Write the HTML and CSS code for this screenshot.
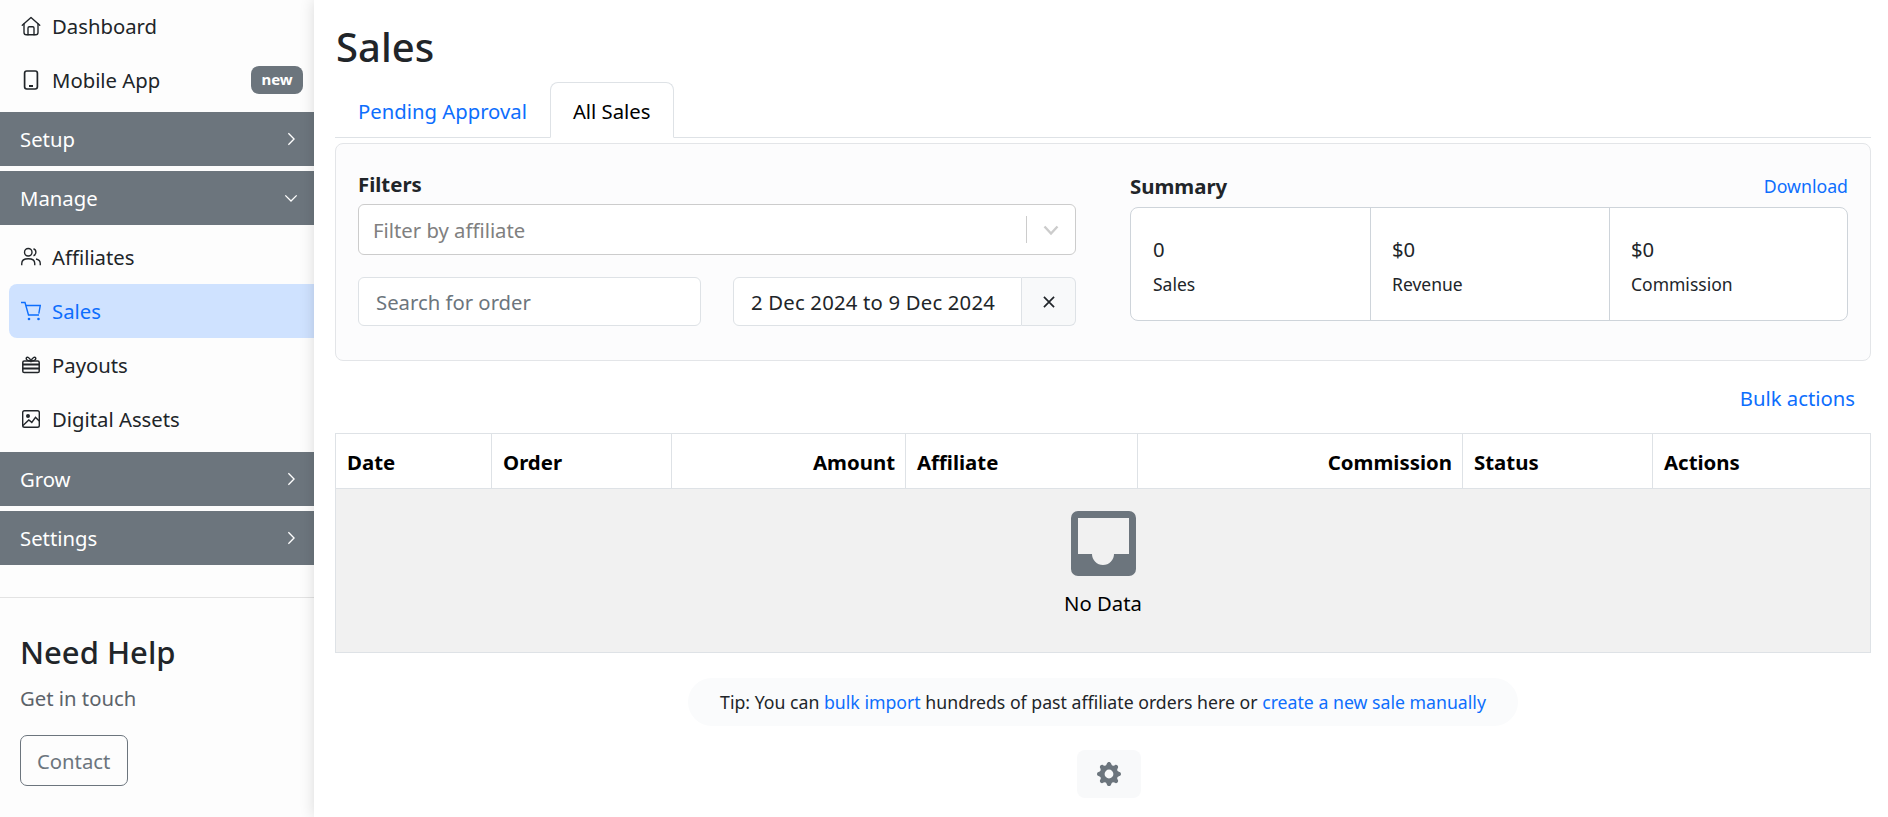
FILE: index.html
```html
<!DOCTYPE html>
<html lang="en">
<head>
    <meta charset="UTF-8">
    <title>Sales</title>
    <meta name="viewport" content="width=device-width, initial-scale=1">
    <link rel="stylesheet" href="styles.css">
</head>
<body>
    <aside class="sidebar">
        <nav class="nav">
            <a class="nav-link">
                <svg class="nav-icon" viewBox="0 0 16 16" fill="none" stroke="currentColor" stroke-width="1.1" stroke-linejoin="round" stroke-linecap="round"><path d="M1 7.4 8 1.2l7 6.2"/><path d="M2.400 6.400v6.800a1.800 1.800 0 0 0 1.800 1.800h7.600a1.800 1.800 0 0 0 1.800-1.800V6.400"/><path d="M5.600 15V9.600a1 1 0 0 1 1-1h2.800a1 1 0 0 1 1 1V15"/></svg>
                Dashboard
            </a>
            <a class="nav-link">
                <svg class="nav-icon" viewBox="0 0 20 20" fill="none" stroke="currentColor" stroke-width="1.700"><rect x="3.600" y="1" width="12.800" height="18" rx="2.200"/><path d="M8 16h4" stroke-width="2"/></svg>
                Mobile App
                <span class="badge">new</span>
            </a>
            <a class="nav-group first">Setup
                <svg class="chevron" viewBox="0 0 16 16" fill="none" stroke="currentColor" stroke-width="1.5"><path d="m5 1.500 6.500 6.500L5 14.500"/></svg>
            </a>
            <a class="nav-group">Manage
                <svg class="chevron" viewBox="0 0 16 16" fill="none" stroke="currentColor" stroke-width="1.5"><path d="M1.500 5 8 11.500 14.500 5"/></svg>
            </a>
            <a class="nav-link">
                <svg class="nav-icon" viewBox="0 0 16 16" fill="none" stroke="currentColor" stroke-width="1.1"><circle cx="5.800" cy="4.200" r="3"/><path d="M.6 14.600v-1.500c0-2.300 2-3.700 5.200-3.700s5.200 1.400 5.200 3.700v1.500"/><path d="M10 1.400a3 3 0 0 1 0 5.600"/><path d="M12 9.600c2 .4 3.400 1.600 3.400 3.500v1.500"/></svg>
                Affiliates
            </a>
            <a class="nav-link active">
                <svg class="nav-icon" viewBox="0 0 20 20" fill="none" stroke="currentColor" stroke-width="1.400"><path d="M0 1.500h4L7.500 14H18"/><path d="M4.800 4.500h14.500l-1.500 8.200"/><circle cx="8" cy="18" r="1.300" fill="currentColor" stroke="none"/><circle cx="17.500" cy="18" r="1.300" fill="currentColor" stroke="none"/></svg>
                Sales
            </a>
            <a class="nav-link">
                <svg class="nav-icon" viewBox="0 0 20 20" fill="none" stroke="currentColor" stroke-width="1.500"><rect x="1.800" y="6" width="16.400" height="11.600" rx="1.400"/><path d="M1.800 9.400h16.400M1.800 13.400h16.400" stroke-width="2"/><path d="M10 6C8.400 1.800 5.400 1.400 5.200 3.400 5 5.200 7.800 6 10 6c2.200 0 5-.8 4.800-2.600C14.600 1.400 11.600 1.800 10 6z"/></svg>
                Payouts
            </a>
            <a class="nav-link">
                <svg class="nav-icon" viewBox="0 0 20 20" fill="none" stroke="currentColor" stroke-width="1.400"><rect x="1.700" y="1.700" width="16.600" height="16.600" rx="1.800"/><circle cx="7" cy="7" r="2" fill="currentColor" stroke="none"/><path d="M2 16.400 7.800 11l3 2.400 3.700-5 3.800 3.600"/></svg>
                Digital Assets
            </a>
            <a class="nav-group first grow">Grow
                <svg class="chevron" viewBox="0 0 16 16" fill="none" stroke="currentColor" stroke-width="1.5"><path d="m5 1.500 6.500 6.500L5 14.500"/></svg>
            </a>
            <a class="nav-group">Settings
                <svg class="chevron" viewBox="0 0 16 16" fill="none" stroke="currentColor" stroke-width="1.5"><path d="m5 1.500 6.500 6.500L5 14.500"/></svg>
            </a>
        </nav>
        <div class="help">
            <h4>Need Help</h4>
            <p>Get in touch</p>
            <a class="btn-contact">Contact</a>
        </div>
    </aside>

    <main class="main">
        <h1>Sales</h1>
        <div class="tabs">
            <a class="tab">Pending Approval</a>
            <a class="tab active">All Sales</a>
        </div>

        <section class="panel">
            <div class="filters">
                <div class="panel-title filters-title">Filters</div>
                <div class="select">
                    <span class="select-text">Filter by affiliate</span>
                    <span class="select-sep"></span>
                    <svg class="select-arrow" viewBox="0 0 20 20" fill="none" stroke="currentColor" stroke-width="2.4"><path d="m3.500 6.500 6.500 7 6.500-7"/></svg>
                </div>
                <div class="filter-row">
                    <input class="field" type="text" placeholder="Search for order">
                    <div class="date-group">
                        <input class="field date-field" type="text" value="2 Dec 2024 to 9 Dec 2024">
                        <span class="date-clear">
                            <svg viewBox="0 0 16 16" fill="none" stroke="currentColor" stroke-width="1.500"><path d="m3.500 3.500 9 9m0-9-9 9"/></svg>
                        </span>
                    </div>
                </div>
            </div>
            <div class="summary">
                <div class="summary-head">
                    <span class="panel-title">Summary</span>
                    <a class="download">Download</a>
                </div>
                <div class="stats">
                    <div class="stat"><div class="stat-value">0</div><div class="stat-label">Sales</div></div>
                    <div class="stat"><div class="stat-value">$0</div><div class="stat-label">Revenue</div></div>
                    <div class="stat"><div class="stat-value">$0</div><div class="stat-label">Commission</div></div>
                </div>
            </div>
        </section>

        <div class="bulk"><a>Bulk actions</a></div>

        <table class="sales-table">
            <thead>
                <tr>
                    <th class="col-date">Date</th>
                    <th class="col-order">Order</th>
                    <th class="col-amount right">Amount</th>
                    <th class="col-affiliate">Affiliate</th>
                    <th class="col-commission right">Commission</th>
                    <th class="col-status">Status</th>
                    <th>Actions</th>
                </tr>
            </thead>
            <tbody>
                <tr>
                    <td colspan="7" class="empty">
                        <svg class="empty-icon" viewBox="0 0 65 65"><path fill="#6c757d" fill-rule="evenodd" d="M7 0h51a7 7 0 0 1 7 7v51a7 7 0 0 1-7 7H7a7 7 0 0 1-7-7V7a7 7 0 0 1 7-7zm0 7v36h14a11 11 0 0 0 22 0h15V7z"/></svg>
                        <div>No Data</div>
                    </td>
                </tr>
            </tbody>
        </table>

        <div class="tip-row">
            <div class="tip">Tip: You can <a>bulk import</a> hundreds of past affiliate orders here or <a>create a new sale manually</a></div>
        </div>
        <div class="tip-row">
            <button class="gear-btn">
                <svg viewBox="0 0 16 16" fill="#6c757d"><path d="M9.405 1.050c-.413-1.400-2.397-1.400-2.810 0l-.1.340a1.464 1.464 0 0 1-2.105.872l-.310-.170c-1.283-.698-2.686.705-1.987 1.987l.169.311c.446.820.023 1.841-.872 2.105l-.340.100c-1.400.413-1.400 2.397 0 2.810l.340.100a1.464 1.464 0 0 1 .872 2.105l-.170.310c-.698 1.283.705 2.686 1.987 1.987l.311-.169a1.464 1.464 0 0 1 2.105.872l.1.340c.413 1.400 2.397 1.400 2.810 0l.1-.340a1.464 1.464 0 0 1 2.105-.872l.310.170c1.283.698 2.686-.705 1.987-1.987l-.169-.311a1.464 1.464 0 0 1 .872-2.105l.340-.100c1.400-.413 1.400-2.397 0-2.810l-.340-.100a1.464 1.464 0 0 1-.872-2.105l.170-.310c.698-1.283-.705-2.686-1.987-1.987l-.311.169a1.464 1.464 0 0 1-2.105-.872l-.1-.340zM8 10.930a2.929 2.929 0 1 1 0-5.860 2.929 2.929 0 0 1 0 5.858z"/></svg>
            </button>
        </div>
    </main>
</body>
</html>
```

FILE: styles.css
```css
html, body {
    height: 100%;
    margin: 0;
    padding: 0;
    overflow: hidden;
}
body {
    display: flex;
    font-family: "Noto Sans", Arial, sans-serif;
    font-size: 20.3px;
    line-height: 30px;
    color: #212529;
    background: #fff;
}
a { color: #0d6efd; }

/* sidebar */
.sidebar {
    width: 314px;
    flex-shrink: 0;
    background: #fdfdfd;
}
.nav {
    margin-top: -1px;
    padding-bottom: 27px;
    border-bottom: 1px solid #e3e3e3;
}
.nav-link {
    display: flex;
    align-items: center;
    height: 54px;
    padding-left: 21px;
    color: #212529;
}
.nav-link.active {
    margin-left: 9px;
    padding-left: 12px;
    background: #cfe2ff;
    color: #0d6efd;
    border-radius: 8px 0 0 8px;
}
.nav-icon {
    width: 20px;
    height: 20px;
    margin-right: 11px;
}
.badge {
    margin-left: auto;
    margin-right: 11px;
    width: 52px;
    height: 28px;
    border-radius: 8px;
    background: #6c757d;
    color: #fff;
    font-size: 15px;
    font-weight: 700;
    line-height: 27px;
    text-align: center;
}
.nav-group {
    display: flex;
    align-items: center;
    justify-content: space-between;
    height: 54px;
    margin-bottom: 5px;
    padding: 0 16px 0 20px;
    background: #6c757d;
    color: #fff;
}
.nav-group.first { margin-top: 5px; }
.nav-group.grow { margin-top: 6px; }
.chevron {
    width: 14px;
    height: 14px;
}
.help {
    padding: 35px 20px 0;
}
.help h4 {
    margin: 0;
    font-size: 31px;
    font-weight: 500;
    line-height: 38px;
}
.help p {
    margin: 12px 0 0;
    color: #5c636a;
}
.btn-contact {
    display: inline-block;
    margin-top: 22px;
    padding: 10px 17px 9px 16px;
    border: 1px solid #6c757d;
    border-radius: 7px;
    color: #6c757d;
}

/* main */
.main {
    flex: 1;
    min-width: 0;
    position: relative;
    padding: 23px 17px 0 21px;
    background: #fff;
    box-shadow: 0 0 14px rgba(0,0,0,0.14);
}
h1 {
    margin: 0 0 11px;
    padding-left: 1px;
    font-size: 40px;
    font-weight: 500;
    line-height: 48px;
}
.tabs {
    display: flex;
    height: 56px;
    box-sizing: border-box;
    border-bottom: 1px solid #dee2e6;
}
.tab {
    padding: 14px 23px 0;
    height: 55px;
    box-sizing: border-box;
}
.tab.active {
    height: 56px;
    background: #fff;
    color: #000;
    border: 1px solid #dee2e6;
    border-bottom-color: #fff;
    border-radius: 8px 8px 0 0;
    padding: 13px 22px 0;
}
.panel {
    display: grid;
    grid-template-columns: 718px 718px;
    column-gap: 54px;
    height: 218px;
    box-sizing: border-box;
    margin-top: 5px;
    padding: 24px 21px 0 22px;
    background: #fcfcfd;
    border: 1px solid #e3e5e8;
    border-radius: 8px;
}
.panel-title {
    font-size: 20.4px;
    font-weight: 700;
    color: #212529;
}
.filters-title { padding-top: 1px; }
.select {
    display: flex;
    align-items: center;
    height: 51px;
    box-sizing: border-box;
    margin-top: 5px;
    padding-left: 14px;
    background: #fff;
    border: 1px solid #ccc;
    border-radius: 6px;
    color: #808080;
}
.select-text { flex: 1; }
.select-sep {
    width: 1px;
    height: 27px;
    background: #ccc;
}
.select-arrow {
    width: 20px;
    height: 20px;
    margin: 0 14px;
    color: #ccc;
}
.filter-row {
    display: grid;
    grid-template-columns: 343px 343px;
    column-gap: 32px;
    margin-top: 22px;
}
.field {
    width: 100%;
    height: 49px;
    box-sizing: border-box;
    padding: 0 17px;
    font: inherit;
    color: #212529;
    background: #fff;
    border: 1px solid #dee2e6;
    border-radius: 6px;
    outline: none;
}
.field::placeholder { color: #6c757d; opacity: 1; }
.date-group { display: flex; }
.date-group .field {
    border-radius: 6px 0 0 6px;
    flex: 1;
    min-width: 0;
}
.date-field { letter-spacing: 0.2px; }
.date-clear {
    display: flex;
    align-items: center;
    justify-content: center;
    flex: 0 0 54px;
    box-sizing: border-box;
    background: #f8f9fa;
    border: 1px solid #dee2e6;
    border-left: 0;
    border-radius: 0 6px 6px 0;
}
.date-clear svg {
    width: 18px;
    height: 18px;
}
.summary { padding-top: 3px; }
.summary-head {
    display: flex;
    justify-content: space-between;
    align-items: center;
    margin-bottom: 6px;
}
.download { font-size: 17.7px; }
.stats {
    display: grid;
    grid-template-columns: 239px 239px 1fr;
    height: 114px;
    box-sizing: border-box;
    background: #fff;
    border: 1px solid #ced4da;
    border-radius: 8px;
}
.stat {
    padding: 26px 21px 0;
    border-left: 1px solid #ced4da;
}
.stat:first-child {
    border-left: 0;
    padding-left: 22px;
}
.stat-value { color: #212529; }
.stat-label {
    margin-top: 7px;
    font-size: 17.5px;
    line-height: 27px;
}
.bulk {
    margin: 22px 0 20px;
    padding-right: 16px;
    text-align: right;
}

/* table */
.sales-table {
    width: 100%;
    table-layout: fixed;
    border-collapse: collapse;
}
.sales-table th {
    height: 55px;
    padding: 2px 10px 0 11px;
    box-sizing: border-box;
    text-align: left;
    color: #000;
    font-size: 20.4px;
    font-weight: 700;
    border: 1px solid #dee2e6;
}
.sales-table th.right { text-align: right; }
.col-date { width: 156px; }
.col-order { width: 180px; }
.col-amount { width: 234px; }
.col-affiliate { width: 232px; }
.col-commission { width: 325px; }
.col-status { width: 190px; }
.empty {
    height: 164px;
    box-sizing: border-box;
    background: #f1f1f1;
    border: 1px solid #dee2e6;
    text-align: center;
    vertical-align: top;
    padding: 22px 0 0;
    color: #000;
}
.empty-icon {
    display: block;
    width: 65px;
    height: 65px;
    margin: 0 auto 12px;
}
.tip-row {
    display: flex;
    justify-content: center;
}
.tip {
    margin-top: 25px;
    padding: 0 32px;
    height: 48px;
    line-height: 48px;
    font-size: 17.7px;
    background: #fafbfc;
    border-radius: 24px;
}
.gear-btn {
    display: flex;
    align-items: center;
    justify-content: center;
    width: 64px;
    height: 48px;
    margin-top: 24px;
    margin-left: 12px;
    padding: 0;
    background: #f8f9fa;
    border: 0;
    border-radius: 8px;
}
.gear-btn svg {
    width: 24px;
    height: 24px;
}
```
